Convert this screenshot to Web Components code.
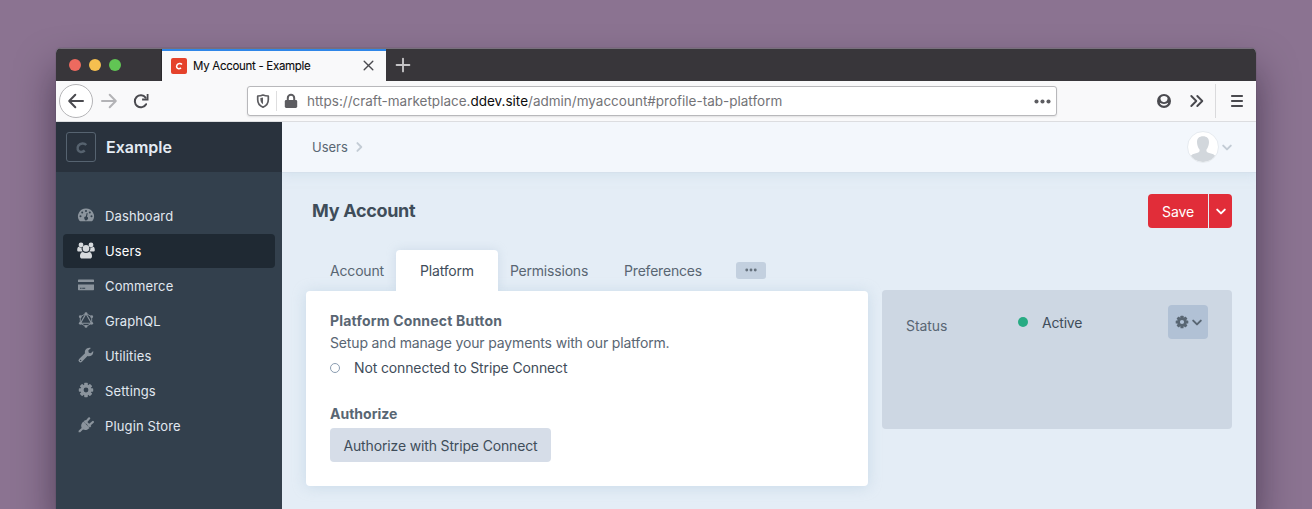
<!DOCTYPE html>
<html lang="en">
<head>
<meta charset="utf-8">
<title>My Account - Example</title>
<style>
html,body{margin:0;height:100%}
body{background:#8b7391;overflow:hidden;font-family:Inter,"Liberation Sans",sans-serif;font-size:14px;line-height:20px;color:#3f4d5a;padding:48px 56px 0;box-sizing:border-box}
</style>
</head>
<body>
<browser-window>
  <window-tabs slot="tabs"></window-tabs>
  <window-toolbar slot="toolbar"></window-toolbar>
  <cp-sidebar></cp-sidebar>
  <cp-main></cp-main>
</browser-window>
<script>
const define = (name, html) => {
  const t = document.createElement('template');
  t.innerHTML = html;
  customElements.define(name, class extends HTMLElement {
    constructor() {
      super();
      this.attachShadow({mode: 'open'}).append(t.content.cloneNode(true));
    }
  });
};

const teeth = n => Array.from({length: n}, (_, i) =>
  `<rect x="6.2" y="0.8" width="3.6" height="4" rx=".7" transform="rotate(${i * 360 / n} 8 8)"/>`).join('');

const ICONS = {
  back: ['0 0 16 16', '<path d="M15 8H1.6M7.3 1.800 1.200 8l6.100 6.200" fill="none" stroke="currentColor" stroke-width="2" stroke-linecap="round" stroke-linejoin="round"/>'],
  forward: ['0 0 16 16', '<path d="M1 8h13.400M8.700 1.800 14.800 8l-6.100 6.200" fill="none" stroke="currentColor" stroke-width="2" stroke-linecap="round" stroke-linejoin="round"/>'],
  reload: ['0 0 16 16', '<path d="M13.100 11.200A6 6 0 1 1 12.600 4.600" fill="none" stroke="currentColor" stroke-width="2" stroke-linecap="round"/><path d="M15.500 1v6.400H9.100V5.600H13.700V1z"/>'],
  close: ['0 0 12 12', '<path d="m1.300 1.300 9.400 9.400m0-9.400-9.400 9.400" fill="none" stroke="currentColor" stroke-width="1.500" stroke-linecap="round"/>'],
  plus: ['0 0 14 14', '<path d="M7 .6v12.800M.6 7h12.800" fill="none" stroke="currentColor" stroke-width="1.900" stroke-linecap="round"/>'],
  shield: ['0 0 14 14', '<path d="M7 1c1.800.8 3.600 1 5.300 1v3.700c0 3.300-1.700 6-5.300 7.500-3.600-1.500-5.300-4.200-5.300-7.500V2C3.400 2 5.200 1.800 7 1z" fill="none" stroke="currentColor" stroke-width="1.700" stroke-linejoin="round"/><path d="M7 3.600v6.700C5.200 9.100 4.500 7.600 4.400 5.800V4.100C5.200 4.100 6.200 3.900 7 3.600z"/>'],
  lock: ['0 0 14 16', '<path d="M3.800 8V5a3.200 3.200 0 0 1 6.400 0v3" fill="none" stroke="currentColor" stroke-width="2"/><rect x=".8" y="7" width="12.400" height="8" rx="1.400"/>'],
  dots: ['0 0 17 5', '<circle cx="2.500" cy="2.500" r="2.050"/><circle cx="8.500" cy="2.500" r="2.050"/><circle cx="14.500" cy="2.500" r="2.050"/>'],
  account: ['0 0 16 16', '<circle cx="8" cy="8" r="7"/><path d="M4.500 5.600C4.500 3.900 6 3 8 3s3.500.9 3.500 2.600C11.500 7.800 10 9.200 8 9.200S4.500 7.800 4.500 5.600z" fill="#f9f9fa"/><path d="M3.700 9.800c1 .1 2.300 1.200 4.300 1.200s3.300-1.100 4.300-1.200c-.6 1.900-2.200 3-4.300 3s-3.700-1.100-4.300-3z" fill="#f9f9fa"/>'],
  chevrons: ['0 0 14 12', '<path d="m1.300 1 5 5-5 5M7.300 1l5 5-5 5" fill="none" stroke="currentColor" stroke-width="1.900" stroke-linecap="round" stroke-linejoin="round"/>'],
  menu: ['0 0 12 12', '<path d="M.9 1h10.200M.9 6h10.200M.9 11h10.200" stroke="currentColor" stroke-width="1.900" stroke-linecap="round"/>'],
  gauge: ['0 0 16 14', '<path fill-rule="evenodd" d="M8 .4a7.900 7.900 0 0 0-6.700 12.200c.2.400.5.600.9.600h11.600c.4 0 .7-.2.900-.6A7.900 7.900 0 0 0 8 .4zM8 1.900a1 1 0 1 1 0 2 1 1 0 0 1 0-2zM4.200 3.500a1 1 0 1 1 0 2 1 1 0 0 1 0-2zm7.600 0a1 1 0 1 1 0 2 1 1 0 0 1 0-2zM2.500 7.300a1 1 0 1 1 0 2 1 1 0 0 1 0-2zm11 0a1 1 0 1 1 0 2 1 1 0 0 1 0-2zM8.700 5l1 .2-.7 3.600a1.800 1.800 0 1 1-1.200-.2z"/>'],
  users: ['0 0 18 17', '<circle cx="9" cy="6.400" r="3.300"/><circle cx="4" cy="2.900" r="2.400"/><circle cx="14" cy="2.900" r="2.400"/><path d="M4.700 5.600c-.4 1.700.1 3 1.200 4H1.800C.7 9.600.2 9 .2 8c0-2 .5-3.300 1.600-3.300.8.700 2 .9 2.900.9zM13.300 5.600c.4 1.700-.1 3-1.200 4h4.100c1.100 0 1.600-.6 1.600-1.600 0-2-.5-3.300-1.600-3.300-.8.700-2 .9-2.900.9z"/><path d="M6 9.900c1.800 1.300 4.200 1.300 6 0 2.100.1 3 1.700 3 4.300 0 1.500-.9 2.300-2.200 2.300H5.200C3.900 16.500 3 15.700 3 14.200c0-2.600.9-4.200 3-4.300z"/>'],
  card: ['0 0 16 12', '<path d="M.6.500h14.800c.3 0 .6.300.6.600v1.800H0V1.100C0 .8.300.5.600.5zM0 5.400h16v5.100c0 .4-.3.700-.7.700H.7c-.4 0-.7-.3-.7-.7z"/><path d="M2 9.200h1.600M4.200 9.200h3" stroke="#33404d" stroke-width="1.100"/>'],
  graphql: ['0 0 16 16', '<g fill="none" stroke="currentColor"><path d="M8 1.500 13.700 4.700v6.600L8 14.500l-5.700-3.200V4.700z" stroke-width=".9"/><path d="M8 1.700 13.500 11.200h-11z" stroke-width="1.100"/></g><circle cx="8" cy="1.600" r="1.400"/><circle cx="13.700" cy="4.700" r="1.400"/><circle cx="13.700" cy="11.300" r="1.400"/><circle cx="8" cy="14.400" r="1.400"/><circle cx="2.300" cy="11.300" r="1.400"/><circle cx="2.300" cy="4.700" r="1.400"/>'],
  wrench: ['0 0 16 16', '<path fill-rule="evenodd" d="M15.200 3.900c.3 1.700-.2 3.200-1.400 4.300-1.200 1.100-2.800 1.400-4.300.9l-5.600 5.600a1.900 1.900 0 0 1-2.800-2.800l5.900-5.700C6.300 3.400 8.300.8 11.200.7c.6 0 1.200.1 1.700.3L10.300 3.600l.5 2.100 2 .5zM2.600 12.700a.7.700 0 1 0 0 1.400.7.700 0 0 0 0-1.400z"/>'],
  gear: ['0 0 16 16', teeth(8) + '<circle cx="8" cy="8" r="3.900" fill="none" stroke="currentColor" stroke-width="3"/>'],
  plug: ['0 0 16 16', '<path d="M5.300 4.600 11.600 10.900C9.700 12.800 7.400 13.500 5 12.500L2.200 15.300H.6V13.700L3.600 10.900C2.600 8.600 3.400 6.500 5.300 4.600z"/><path d="m7.500 5.500 3.700-4.200M10.700 8.700l4.200-3.700" stroke="currentColor" stroke-width="2.200" stroke-linecap="round"/><path d="m5.700 4.300 1.600-1.300 6 6-1.300 1.600z"/>'],
  down: ['0 0 10 7', '<path d="m1.200 1.600 3.800 3.800 3.800-3.800" fill="none" stroke="currentColor" stroke-width="2" stroke-linecap="round" stroke-linejoin="round"/>'],
  right: ['0 0 7 10', '<path d="m1.400 1.100 3.900 3.900-3.900 3.900" fill="none" stroke="currentColor" stroke-width="1.900" stroke-linecap="round" stroke-linejoin="round"/>'],
  person: ['0 0 30 30', '<path d="M15 4.200c3.700 0 6 2.100 6 5.800 0 2.500-.9 5.600-2.500 7.500-.5 2.200.7 3 3.500 3.700 2.500.6 4.500 1.400 5.500 3A15 15 0 0 1 15 30 15 15 0 0 1 2.500 24.200c1-1.600 3-2.400 5.500-3 2.800-.7 4-1.500 3.500-3.700C9.900 15.600 9 12.500 9 10c0-3.700 2.300-5.800 6-5.800z"/>'],
  c: ['0 0 12 12', '<path d="M10.400 3.700C8.500 1.500 5 1.800 3.200 4.200 1.500 6.800 2.500 9.800 5.200 10.100c1.400.2 2.700-.3 3.800-1.300" fill="none" stroke="currentColor" stroke-width="2.300"/>']
};
customElements.define('ui-icon', class extends HTMLElement {
  connectedCallback() {
    if (this.shadowRoot) return;
    const [box, body] = ICONS[this.getAttribute('name')];
    const b = box.split(' ');
    const w = this.getAttribute('w') || b[2], h = this.getAttribute('h') || b[3];
    this.attachShadow({mode: 'open'}).innerHTML =
      `<style>:host{display:inline-flex;flex:none}svg{display:block;overflow:visible}</style><svg width="${w}" height="${h}" viewBox="${box}" fill="currentColor">${body}</svg>`;
  }
});

define('browser-window', `<style>
:host{display:flex;flex-direction:column;height:461px;border-radius:5px 5px 0 0;box-shadow:0 22px 38px rgba(20,10,30,.5),0 0 1px rgba(0,0,0,.5);overflow:hidden;background:#e4edf6}
.page{display:grid;grid-template-columns:226px 1fr;flex:1}
</style><slot name="tabs"></slot><slot name="toolbar"></slot><div class="page"><slot></slot></div>`);

define('window-tabs', `<style>
:host{display:flex;height:33px;background:#38363a;box-sizing:border-box;border-top:1px solid #77707b}
.lights{display:flex;gap:8px;width:106px;box-sizing:border-box;padding:10px 0 0 13px;border-right:1px solid #2a282c}
.lights i{width:12px;height:12px;border-radius:50%;background:#ed6a5f}
.lights i:nth-child(2){background:#f5bf4f}.lights i:nth-child(3){background:#61c554}
.tab{display:flex;align-items:center;width:224px;height:33px;background:#f9f9fa;border-top:2px solid #2f86e8;box-sizing:border-box;padding:0 12px 2px 9px;color:#0c0c0d;font-size:11.5px}
.fav{display:flex;align-items:center;justify-content:center;width:16px;height:16px;border-radius:2px;background:#e5422b;color:#fff;margin-right:6px}
.title{flex:1;letter-spacing:-.3px;white-space:nowrap;padding-top:1px;-webkit-text-stroke:.1px}
.tab ui-icon{color:#4a4a4f}.tab .fav ui-icon{color:#fff}
.new{display:flex;align-items:center;padding:0 0 1px 10px;color:#c5c4c6}
</style><div class="lights"><i></i><i></i><i></i></div>
<div class="tab"><span class="fav"><ui-icon name="c" w="8" h="8"></ui-icon></span><span class="title">My Account - Example</span><ui-icon name="close" w="11" h="11"></ui-icon></div>
<div class="new"><ui-icon name="plus"></ui-icon></div>`);

define('window-toolbar', `<style>
:host{display:flex;align-items:center;height:41px;box-sizing:border-box;background:#f9f9fa;border-bottom:1px solid #dcdde0;color:#4a4a4f;padding-left:3px}
.back{display:flex;align-items:center;justify-content:center;width:32px;height:32px;border:1px solid #b4b4b7;border-radius:50%;background:#fff}
.fwd{color:#b3b3b6;margin-left:8px}.reload{margin-left:16px}
.url{display:flex;align-items:center;width:810px;height:30px;box-sizing:border-box;border:1px solid #b8b8bb;border-radius:3px;background:#fff;box-shadow:0 1px 2px rgba(0,0,0,.1);margin-left:98px;padding:0 5px 0 8px;color:#5d5d61}
.sep{width:1px;height:20px;background:#dededf;margin:0 7px 0 6px}
.text{flex:1;margin:0 0 0 9px;color:#737377;font-size:13.5px;letter-spacing:0;white-space:nowrap}
.text b{font-weight:400;color:#0c0c0d}
.acc{margin-left:99px}.more{margin-left:18px}
.bar{width:1px;height:34px;background:#dadadc;margin:0 15px 0 11px}
</style><span class="back"><ui-icon name="back"></ui-icon></span>
<ui-icon class="fwd" name="forward"></ui-icon><ui-icon class="reload" name="reload"></ui-icon>
<div class="url"><ui-icon name="shield"></ui-icon><span class="sep"></span><ui-icon name="lock"></ui-icon><span class="text">https://craft-marketplace.<b>ddev.site</b>/admin/myaccount#profile-tab-platform</span><ui-icon name="dots"></ui-icon></div>
<ui-icon class="acc" name="account"></ui-icon><ui-icon class="more" name="chevrons"></ui-icon><span class="bar"></span><ui-icon name="menu"></ui-icon>`);

define('nav-item', `<style>
:host{display:flex;align-items:center;height:34px;border-radius:4px;color:#e1e8f0;font-size:13px;letter-spacing:.13px;white-space:nowrap}
:host([active]){background:#1f2933;color:#fff}
.ico{display:flex;justify-content:center;width:18px;margin:0 10px 2px 14px;color:#8b949d}
:host([active]) .ico{color:#d7dadd}
</style><span class="ico"><slot name="icon"></slot></span><span class="label"><slot></slot></span>`);

define('cp-sidebar', `<style>
:host{display:block;background:#33404d}
.site{display:flex;align-items:center;height:50px;background:#29323d;padding-left:10px;color:#e4ebf3;font-weight:600;font-size:16px}
.logo{display:flex;align-items:center;justify-content:center;width:28px;height:28px;border:1px solid #566370;border-radius:3px;color:#56626e;margin-right:10px}
nav{display:flex;flex-direction:column;gap:1px;padding:12px 7px 0;margin-top:15px}
</style><div class="site"><span class="logo"><ui-icon name="c" w="13" h="13"></ui-icon></span><span>Example</span></div>
<nav>
<nav-item><ui-icon slot="icon" name="gauge"></ui-icon>Dashboard</nav-item>
<nav-item active><ui-icon slot="icon" name="users"></ui-icon>Users</nav-item>
<nav-item><ui-icon slot="icon" name="card"></ui-icon>Commerce</nav-item>
<nav-item><ui-icon slot="icon" name="graphql"></ui-icon>GraphQL</nav-item>
<nav-item><ui-icon slot="icon" name="wrench"></ui-icon>Utilities</nav-item>
<nav-item><ui-icon slot="icon" name="gear"></ui-icon>Settings</nav-item>
<nav-item><ui-icon slot="icon" name="plug"></ui-icon>Plugin Store</nav-item>
</nav>`);

define('cp-main', `<style>
:host{display:block;background:#e4edf6;overflow:hidden}
header{display:flex;align-items:center;height:50px;background:#f3f7fc;box-shadow:0 1px 0 #d6e1ec,0 2px 10px rgba(190,212,228,.5);padding:0 24px 0 30px;color:#596673;font-size:13px}
header .r{color:#c3ccd5;margin-left:8px}
.face{display:flex;justify-content:center;overflow:hidden;width:30px;height:30px;border-radius:50%;background:#fff;border:1px solid #e6ebf0;color:#d2d7dc;margin:0 3px 0 auto}
.v{color:#c3ccd5;margin-top:1px}
.head{display:flex;justify-content:space-between;align-items:flex-start;padding:22px 24px 0 30px;height:56px;box-sizing:border-box}
h1{margin:0;font-size:18px;font-weight:700;line-height:34px;color:#3f4d5a;letter-spacing:-.3px}
.cols{display:grid;grid-template-columns:562px 350px;gap:14px;padding:22px 0 0 24px;align-items:start}
</style><header><span class="crumb">Users</span><ui-icon class="r" name="right"></ui-icon><span class="face"><ui-icon name="person"></ui-icon></span><ui-icon class="v" name="down"></ui-icon></header>
<div class="head"><h1>My Account</h1><save-button></save-button></div>
<div class="cols"><content-pane></content-pane><status-panel></status-panel></div>`);

define('save-button', `<style>
:host{display:flex;gap:1px;height:34px;color:#fff;letter-spacing:-.1px}
span{display:flex;align-items:center;justify-content:center;background:#e12d39;width:60px;border-radius:4px 0 0 4px;padding-top:1px;box-sizing:border-box}
span+span{width:23px;border-radius:0 4px 4px 0}
</style><span>Save</span><span><ui-icon name="down"></ui-icon></span>`);

define('content-pane', `<style>
:host{display:block}
.tabs{display:flex;height:41px;align-items:stretch;color:#596673}
.tabs span{display:flex;align-items:center;justify-content:center;box-sizing:border-box;white-space:nowrap;letter-spacing:-.2px;padding-top:1px}
.tabs .first{width:90px;padding-left:12px}
.tabs .on{width:102px;background:#fff;color:#3f4d5a;border-radius:4px 4px 0 0;box-shadow:0 0 10px rgba(170,190,212,.4);clip-path:inset(-12px -12px 0 -12px)}
.tabs .dots{align-self:center;width:30px;height:17px;padding:0 0 1px;border-radius:3px;background:#c3d0df;margin-left:10px;color:#66727e}
.perm{width:102px}.pref{width:126px}
.pane{background:#fff;border-radius:4px;box-shadow:0 1px 14px rgba(160,190,212,.4);height:195px;box-sizing:border-box;padding:20px 24px 0;letter-spacing:-.15px}
b{display:block;color:#596673;font-weight:700;line-height:20px;letter-spacing:.19px}
.auth{letter-spacing:0}
.help{color:#596673;margin-top:2px}
.state{display:flex;align-items:center;gap:14px;margin:5px 0 26px;letter-spacing:-.13px}
.state i{width:8px;height:8px;border:1px solid #8b9db1;border-radius:50%;margin-bottom:1px}
.btn{display:flex;align-items:center;justify-content:center;box-sizing:border-box;width:221px;height:34px;margin-top:4px;padding-top:1px;border-radius:4px;background:#d6dde8;white-space:nowrap}
</style><div class="tabs"><span class="first">Account</span><span class="on">Platform</span><span class="perm">Permissions</span><span class="pref">Preferences</span><span class="dots"><ui-icon name="dots" w="12" h="4"></ui-icon></span></div>
<div class="pane"><b>Platform Connect Button</b><div class="help">Setup and manage your payments with our platform.</div><div class="state"><i></i><span>Not connected to Stripe Connect</span></div><b class="auth">Authorize</b><span class="btn">Authorize with Stripe Connect</span></div>`);

define('status-panel', `<style>
:host{display:flex;align-items:flex-start;box-sizing:border-box;height:139px;margin-top:40px;border-radius:4px;background:#cdd7e3;padding:15px 24px}
.k{width:112px;margin-top:11px;color:#596673;letter-spacing:-.05px}
i{width:10px;height:10px;border-radius:50%;background:#27ab83;margin:12px 14px 0 0}
.val{flex:1;margin-top:8px;letter-spacing:-.2px}
.gear{display:flex;align-items:center;justify-content:center;gap:3px;width:40px;height:34px;border-radius:4px;background:#b1c1d5;color:#596673}
</style><span class="k">Status</span><i></i><span class="val">Active</span><span class="gear"><ui-icon name="gear" w="14" h="14"></ui-icon><ui-icon name="down"></ui-icon></span>`);
</script>
</body>
</html>
